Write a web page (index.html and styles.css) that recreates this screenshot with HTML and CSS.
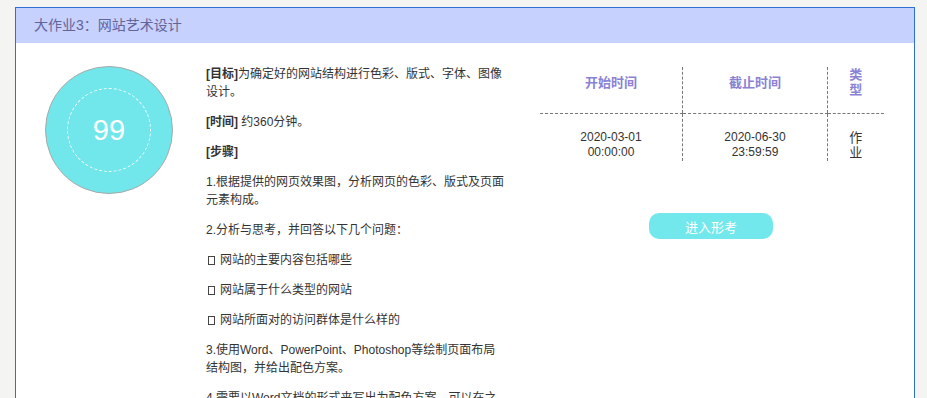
FILE: index.html
```html
<!DOCTYPE html>
<html lang="zh-CN">
<head>
  <meta charset="UTF-8" />
  <meta name="viewport" content="width=device-width, initial-scale=1.0"/>
  <title>大作业3：网站艺术设计</title>
  <link rel="stylesheet" href="styles.css">
</head>
<body>

  <div class="task-card">
    <div class="task-head">大作业3：网站艺术设计</div>

    <div class="task-body">
      <div class="score-col">
        <div class="score-ring">
          <div class="score-inner">99</div>
        </div>
      </div>

      <div class="task-desc">
        <p><b>[目标]</b>为确定好的网站结构进行色彩、版式、字体、图像设计。</p>
        <p><b>[时间]</b> 约360分钟。</p>
        <p><b>[步骤]</b></p>
        <p>1.根据提供的网页效果图，分析网页的色彩、版式及页面元素构成。</p>
        <p>2.分析与思考，并回答以下几个问题：</p>
        <p><span class="box"></span>网站的主要内容包括哪些</p>
        <p><span class="box"></span>网站属于什么类型的网站</p>
        <p><span class="box"></span>网站所面对的访问群体是什么样的</p>
        <p>3.使用Word、PowerPoint、Photoshop等绘制页面布局结构图，并给出配色方案。</p>
        <p>4.需要以Word文档的形式来写出为配色方案，可以在之后的设计中参考使用。</p>
        <p>5.提交设计稿。</p>
      </div>

      <div class="task-info">
        <table class="time-table">
          <tr>
            <th class="c1">开始时间</th>
            <th class="c2">截止时间</th>
            <th class="c3">类型</th>
          </tr>
          <tr>
            <td>2020-03-01<br>00:00:00</td>
            <td>2020-06-30<br>23:59:59</td>
            <td class="c3">作业</td>
          </tr>
        </table>
        <div class="btn-row">
          <button class="enter-btn">进入形考</button>
        </div>
      </div>
    </div>
  </div>

</body>
</html>
```

FILE: styles.css
```css
html, body {
  overflow: hidden;
}

body {
  margin: 0;
  background-color: #f4f4f2;
  font-family: "Liberation Sans", "Noto Sans CJK SC", sans-serif;
  color: #333;
}

.task-card {
  margin: 7px 0 0 15px;
  width: 900px;
  box-sizing: border-box;
  border: 1px solid #2f6fd8;
  background-color: #fff;
  padding-bottom: 40px;
}

.task-head {
  height: 35px;
  line-height: 35px;
  padding-left: 18px;
  background-color: #c6d1fe;
  color: #64649a;
  font-size: 14px;
}

.task-body {
  display: flex;
  align-items: flex-start;
  padding: 22px 0 0 29px;
}

.score-col {
  width: 128px;
  margin-top: 1px;
  margin-right: 33px;
}

.score-ring {
  width: 126px;
  height: 126px;
  border: 1px solid #a9a9a9;
  border-radius: 50%;
  background-color: #72e7eb;
  display: flex;
  align-items: center;
  justify-content: center;
}

.score-inner {
  width: 82px;
  height: 82px;
  border: 1px dashed #fff;
  border-radius: 50%;
  display: flex;
  align-items: center;
  justify-content: center;
  color: #fff;
  font-size: 29px;
}

.task-desc {
  width: 300px;
  font-size: 12px;
  line-height: 18px;
  margin-right: 34px;
}

.task-desc p {
  margin: 0 0 12px;
}

.task-desc b {
  color: #333;
}

.box {
  display: inline-block;
  width: 5px;
  height: 7px;
  border: 1px solid #444;
  margin: 0 5px 0 2px;
  vertical-align: -1px;
}

.task-info {
  width: 342px;
  margin-top: 2px;
}

.time-table {
  width: 100%;
  border-collapse: collapse;
  table-layout: fixed;
}

.time-table th {
  color: #8a82d4;
  font-size: 13px;
  line-height: 15px;
  font-weight: bold;
  padding: 0 0 16px;
  border-bottom: 1px dashed #777;
}

.time-table td {
  font-size: 12px;
  line-height: 15px;
  text-align: center;
  padding: 16px 0 1px;
}

.time-table .c1 {
  width: 142px;
}

.time-table .c2 {
  width: 144px;
}

.time-table .c3 {
  width: 56px;
  padding-left: 17px;
  padding-right: 17px;
  box-sizing: border-box;
}

.time-table td.c3 {
  font-size: 13px;
}

.time-table th + th,
.time-table td + td {
  border-left: 1px dashed #777;
}

.btn-row {
  display: flex;
  justify-content: center;
  margin-top: 52px;
}

.enter-btn {
  width: 124px;
  height: 26px;
  border: none;
  border-radius: 10px;
  background-color: #73e8ec;
  color: #fff;
  font-family: inherit;
  font-size: 13px;
  cursor: pointer;
}
```
